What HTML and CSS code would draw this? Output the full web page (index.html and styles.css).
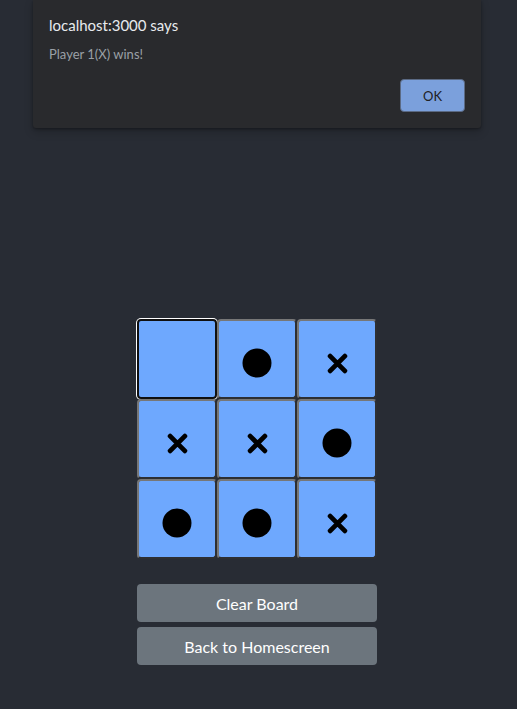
FILE: index.html
```html
<!DOCTYPE html>
<html lang="en">
<head>
<meta charset="utf-8">
<title>Tic Tac Toe</title>
<link rel="stylesheet" href="styles.css">
</head>
<body>
<div class="app">
  <div class="board">
    <button class="cell focused"></button>
    <button class="cell"><svg class="o" viewBox="0 0 30 30"><circle cx="15" cy="15" r="14.5"/></svg></button>
    <button class="cell"><svg class="x" viewBox="0 0 20 20"><path d="M3 3L17 17M17 3L3 17"/></svg></button>
    <button class="cell"><svg class="x" viewBox="0 0 20 20"><path d="M3 3L17 17M17 3L3 17"/></svg></button>
    <button class="cell"><svg class="x" viewBox="0 0 20 20"><path d="M3 3L17 17M17 3L3 17"/></svg></button>
    <button class="cell"><svg class="o" viewBox="0 0 30 30"><circle cx="15" cy="15" r="14.5"/></svg></button>
    <button class="cell"><svg class="o" viewBox="0 0 30 30"><circle cx="15" cy="15" r="14.5"/></svg></button>
    <button class="cell"><svg class="o" viewBox="0 0 30 30"><circle cx="15" cy="15" r="14.5"/></svg></button>
    <button class="cell"><svg class="x" viewBox="0 0 20 20"><path d="M3 3L17 17M17 3L3 17"/></svg></button>
  </div>
  <div class="actions">
    <button class="btn">Clear Board</button>
    <button class="btn">Back to Homescreen</button>
  </div>
</div>
<div class="dialog">
  <div class="dialog-title">localhost:3000 says</div>
  <div class="dialog-msg">Player 1(X) wins!</div>
  <div class="dialog-actions"><button class="ok">OK</button></div>
</div>
</body>
</html>
```
FILE: styles.css
```css
html, body {
  margin: 0;
  padding: 0;
}
body {
  background: #282c34;
  min-height: 100vh;
  font-family: Lato, "Noto Sans", sans-serif;
}
.app {
  display: flex;
  flex-direction: column;
  align-items: center;
  padding-top: 319px;
  padding-right: 3px;
}
.board {
  display: grid;
  grid-template-columns: repeat(3, 80px);
  grid-template-rows: repeat(3, 80px);
}
.cell {
  box-sizing: border-box;
  width: 80px;
  height: 80px;
  margin: 0;
  padding: 8px 0 0 0;
  background: #6ea8fe;
  border: 2px solid;
  border-color: #777777 #2d2f33 #2d2f33 #777777;
  border-radius: 4px;
  display: flex;
  align-items: center;
  justify-content: center;
}
.cell.focused {
  border-color: #101010;
  box-shadow: 0 0 0 1px #ffffff;
}
.o {
  width: 30px;
  height: 30px;
  fill: #000;
}
.x {
  width: 21px;
  height: 21px;
  fill: none;
  stroke: #000;
  stroke-width: 4.6;
  stroke-linecap: round;
}
.actions {
  margin-top: 25px;
  display: flex;
  flex-direction: column;
  gap: 5px;
}
.btn {
  width: 240px;
  height: 38px;
  border: none;
  border-radius: 4px;
  background: #6c757d;
  color: #ffffff;
  font-family: Lato, "Noto Sans", sans-serif;
  font-size: 16px;
  padding: 0;
}
.dialog {
  position: absolute;
  top: 0;
  left: 33px;
  width: 448px;
  box-sizing: border-box;
  height: 128px;
  padding: 15px 16px 16px 16px;
  background: #292a2d;
  border-radius: 0 0 3px 3px;
  box-shadow: 0 1px 3px rgba(0, 0, 0, 0.35), 0 4px 10px rgba(0, 0, 0, 0.2);
  display: flex;
  flex-direction: column;
}
.dialog-title {
  font-size: 15px;
  line-height: 20px;
  color: #e8eaed;
}
.dialog-msg {
  margin-top: 10px;
  font-size: 13px;
  line-height: 18px;
  color: #9aa0a6;
}
.dialog-actions {
  margin-top: auto;
  display: flex;
  justify-content: flex-end;
}
.ok {
  width: 65px;
  height: 33px;
  box-sizing: border-box;
  background: #7ba0dc;
  border: 1px solid #5b6a84;
  border-radius: 4px;
  color: #202124;
  font-family: Lato, "Noto Sans", sans-serif;
  font-size: 13px;
  padding: 0;
}
```
